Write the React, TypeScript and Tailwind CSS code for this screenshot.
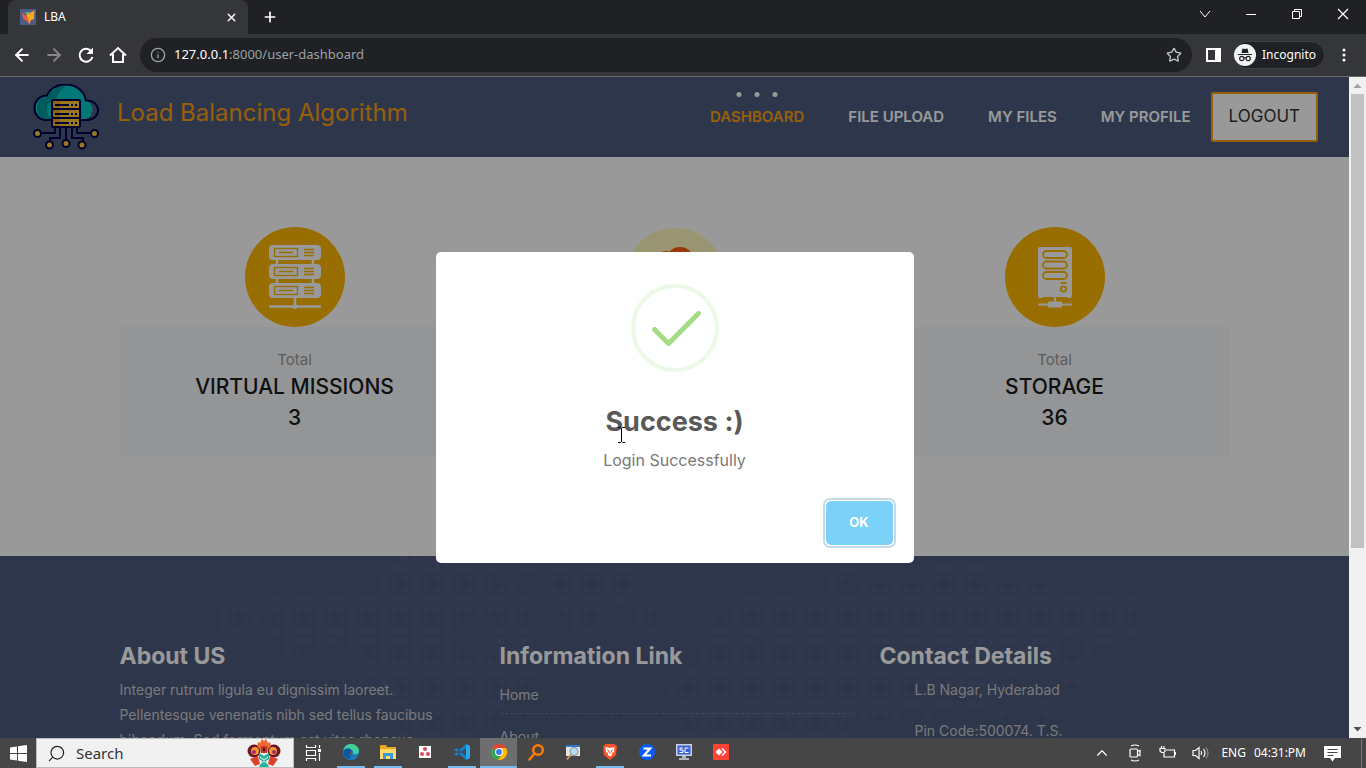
import type { ReactNode } from "react";
import {
  ArrowLeft,
  ArrowRight,
  ChevronUp,
  Info,
  Plus,
  Search,
  Star,
  X,
} from "lucide-react";

const DOT_ROWS: [number, number][][] = [
  [[398, 430]],
  [[383, 500], [520, 640], [840, 855], [925, 985]],
  [[383, 500], [550, 638], [830, 845], [935, 975]],
  [[378, 516], [550, 632], [830, 835], [862, 1050]],
  [[218, 230], [272, 530], [555, 625], [733, 790], [840, 1135]],
  [[218, 250], [272, 530], [560, 605], [638, 655], [725, 1135]],
  [[218, 265], [275, 460], [497, 528], [565, 600], [638, 660], [712, 745], [755, 1135]],
  [[218, 238], [275, 455], [497, 528], [570, 590], [645, 656], [705, 1135]],
  [[282, 335], [345, 455], [495, 530], [705, 755], [765, 1062], [1085, 1110]],
  [[282, 300], [360, 460], [500, 540], [700, 1062], [1085, 1095]],
  [[370, 540], [695, 1085]],
  [[370, 550], [685, 995], [1010, 1030], [1080, 1090]],
  [[378, 530], [680, 995], [1065, 1080]],
  [[380, 515], [670, 1000], [1035, 1050]],
  [[385, 505], [670, 690], [733, 990], [1035, 1055]],
  [[390, 500], [680, 900], [925, 935], [995, 1010], [1035, 1050]],
  [[400, 500], [680, 850], [1030, 1050]],
  [[400, 470], [675, 850]],
];

function WorldDots() {
  const dots: ReactNode[] = [];
  DOT_ROWS.forEach((ranges, r) => {
    for (let k = 0; k < 87; k++) {
      const x = 223.3 + k * 10.67;
      if (ranges.some(([a, b]) => x >= a && x <= b)) {
        dots.push(<rect key={r + "-" + k} x={x - 3} y={r * 10.4 - 1} width="6" height="6" />);
      }
    }
  });
  return (
    <svg aria-hidden="true" className="absolute left-1/2 top-0 -translate-x-1/2" width="1349" height="190" viewBox="0 0 1349 190" fill="#fff" fillOpacity="0.035">
      {dots}
    </svg>
  );
}

function CloudLogo() {
  return (
    <svg width="66" height="67" viewBox="0 0 66 67" fill="none" stroke="#00004c" strokeWidth="2" aria-hidden="true">
      <path d="M11 35.500h41A10 10 0 0 0 53 16.500C49-3 20-4 15 11.500A12 12 0 0 0 11 35.500Z" fill="#00c8c4" stroke="none" />
      <path d="M15 12C20 4 27 1 34 2c-7 3-10 8-11 14-6 1-9 4-9 9 0 5 2 8 5 10h-8A12 12 0 0 1 15 12Z" fill="#009a9c" stroke="none" />
      <path d="M19 36h-6C-2 36-3 12 14 11.500 20-4 49-4 53 16.500c16 0 16 19 1 19.500h-6" />
      <path d="M22 43v6H9M27 43v11H17v3M33 43v13M39 43v11h11v3M44 43v6h14" strokeWidth="2" />
      <rect x="19" y="16" width="28" height="27" rx="1" fill="#ffcc38" />
      <path d="M20 17h7v25h-7z" fill="#f5a623" stroke="none" />
      <path d="M19 25h28M19 34h28" />
      <path d="M22 21h14M22 30h14M22 39h14M38 21h2M42 21h2M38 30h2M42 30h2M38 39h2M42 39h2" />
      <g fill="#ffcc38">
        <circle cx="4.500" cy="49.500" r="3.500" />
        <circle cx="61.500" cy="49.500" r="3.500" />
        <circle cx="16.500" cy="61" r="3.500" />
        <circle cx="33" cy="59.500" r="3.500" />
        <circle cx="49" cy="61" r="3.500" />
      </g>
    </svg>
  );
}

function RackIcon() {
  return (
    <svg width="100" height="100" viewBox="0 0 100 100" aria-hidden="true">
      <circle cx="50" cy="50" r="50" fill="#ffb700" />
      <g stroke="#fff" strokeWidth="2.500" strokeLinecap="round">
        <path d="M32 25v40M68 25v40M50 69v11M25 79.500h50" />
      </g>
      <circle cx="50" cy="79.500" r="2.500" fill="#fff" />
      {[18, 37, 56].map((y) => (
        <g key={y} transform={"translate(24 " + y + ")"}>
          <rect width="52" height="15" rx="4" fill="#fff" />
          <g fill="none" stroke="#ffb700" strokeWidth="1.300">
            <rect x="5.500" y="3.500" width="23" height="8" />
            <path d="M10 7.500h14M35 4.500h10M35 7.500h10M35 10.500h10" />
          </g>
        </g>
      ))}
    </svg>
  );
}

function TowerIcon() {
  return (
    <svg width="100" height="100" viewBox="0 0 100 100" aria-hidden="true">
      <circle cx="50" cy="50" r="50" fill="#ffb700" />
      <path d="M35 20h30q2 0 2 2v47q0 2-2 2h-2l-1-1H38l-1 1h-2q-2 0-2-2V22q0-2 2-2Z" fill="#fff" />
      <g fill="none" stroke="#ffb700" strokeWidth="1.800">
        <rect x="38" y="24" width="24" height="7" rx="3.500" />
        <rect x="38" y="34.500" width="24" height="7" rx="3.500" />
        <rect x="38" y="45" width="24" height="7" rx="3.500" />
        <circle cx="58.500" cy="62" r="2.700" />
        <path d="M55.500 56h6" />
      </g>
      <path d="M50 70v6M34 77.500h32" stroke="#fff" strokeWidth="1.800" strokeLinecap="round" />
      <rect x="43" y="74.500" width="14" height="6" rx="1" fill="#fff" />
    </svg>
  );
}

function CloudUserIcon() {
  return (
    <svg width="100" height="100" viewBox="0 0 100 100" aria-hidden="true">
      <circle cx="50" cy="51" r="50" fill="#fff9c0" />
      <circle cx="55" cy="34" r="14" fill="#ff5c0a" />
      <circle cx="41" cy="36" r="12" fill="#ff5c0a" />
    </svg>
  );
}

function StatCard({ icon, title, value }: { icon: ReactNode; title?: string; value?: string }) {
  return (
    <article className="flex flex-col items-center">
      {icon}
      <div className="flex w-full flex-1 flex-col items-center bg-[#f5f8fc] pt-[18px] pb-6">
        {title && (
          <>
            <p className="text-[15px] leading-[30px] text-[#9b9b9b]">Total</p>
            <h2 className="text-[21px] leading-6 font-medium text-[#1b1b1b]">{title}</h2>
            <p className="pt-1 text-[21px] leading-[29px] font-medium text-[#1b1b1b]">{value}</p>
          </>
        )}
      </div>
    </article>
  );
}

function BrowserChrome() {
  return (
    <header className="shrink-0 border-b border-[#67686b] bg-[#35363a] font-['Noto_Sans',sans-serif] text-white">
      <div className="flex h-[34px] items-stretch bg-[#202124] pl-2">
        <div className="flex w-60 items-center rounded-t-lg bg-[#35363a] pr-2.5 pl-3">
          <svg width="16" height="16" viewBox="0 0 16 16" aria-hidden="true">
            <path fill="#4d5c85" d="M0 0h16v16H0z" />
            <path fill="#49a9b5" d="M4 3.500 10 2.500l-3 3z" />
            <path fill="#ef5b3c" d="m1.500 3 6 5.500 3 4-1 3-2.500-3.500L3.500 10z" />
            <path fill="#f9a61a" d="M6 5.500 14.500 1.500 14 10l-3.500 1.500-1 3.500-1-4z" />
          </svg>
          <span className="ml-2 text-xs">LBA</span>
          <button aria-label="Close tab" className="ml-auto"><X size={13} strokeWidth={2.5} /></button>
        </div>
        <button aria-label="New tab" className="ml-3.5"><Plus size={16} strokeWidth={2.5} /></button>
        <div className="ml-auto flex w-[167px] items-center justify-between pr-[17px] pb-1.5">
          <button aria-label="Search tabs">
            <svg width="12" height="12" viewBox="0 0 12 12" fill="none" stroke="#fff"><path d="m1 3 5 6 5-6" /></svg>
          </button>
          <button aria-label="Minimize">
            <svg width="12" height="12" viewBox="0 0 12 12" fill="none" stroke="#fff"><path d="M1 6.500h10" /></svg>
          </button>
          <button aria-label="Restore">
            <svg width="12" height="12" viewBox="0 0 12 12" fill="none" stroke="#fff"><path d="M1.500 3.500h7v7h-7zM3.500 3.500v-2h7v7h-2" /></svg>
          </button>
          <button aria-label="Close window">
            <svg width="12" height="12" viewBox="0 0 12 12" fill="none" stroke="#fff" strokeWidth="1.200"><path d="m1 1 10 10M11 1 1 11" /></svg>
          </button>
        </div>
      </div>
      <div className="flex h-[42px] items-center pl-3">
        <nav aria-label="Browser" className="flex items-center gap-3">
          <button aria-label="Back"><ArrowLeft size={20} strokeWidth={2.3} /></button>
          <button aria-label="Forward" className="text-[#85868a]"><ArrowRight size={20} strokeWidth={2.3} /></button>
          <button aria-label="Reload">
            <svg width="20" height="20" viewBox="0 0 20 20" fill="none" stroke="#fff" strokeWidth="2"><path d="M15.500 6.500A6.500 6.500 0 1 0 16.400 12" /><path d="M17 2.500V9h-6.500Z" fill="#fff" stroke="none" /></svg>
          </button>
          <button aria-label="Home page">
            <svg width="20" height="20" viewBox="0 0 20 20" fill="none" stroke="#fff" strokeWidth="2"><path d="M2 10.500 10 3l8 7.500M5 9v8h10V9" /></svg>
          </button>
        </nav>
        <div className="ml-3 flex h-[34px] flex-1 items-center rounded-full bg-[#202124] px-2.5">
          <Info size={16} className="text-[#9aa0a6]" />
          <p className="ml-2 text-[13px] text-[#9aa0a6]"><span className="text-white">127.0.0.1</span>:8000/user-dashboard</p>
          <button aria-label="Bookmark" className="ml-auto text-[#c4c7ca]"><Star size={16} /></button>
        </div>
        <button aria-label="Side panel" className="ml-3.5">
          <svg width="15" height="14" viewBox="0 0 15 14"><path d="M0 0h15v14H0zM2 2v10h7V2z" fill="#fff" fillRule="evenodd" /></svg>
        </button>
        <button className="ml-3 flex h-7 items-center gap-1.5 rounded-full border border-[#3f4043] bg-[#202124] pr-2 text-xs">
          <svg width="22" height="22" viewBox="0 0 22 22" aria-hidden="true">
            <circle cx="11" cy="11" r="11" fill="#f1f3f4" />
            <path d="m7.500 9 1-4.500 2.500.6 2.500-.6 1 4.500z" fill="#202124" />
            <g fill="none" stroke="#202124" strokeWidth="1.200"><path d="M4 10.500h14M10 14q1-.8 2 0" /><circle cx="7.800" cy="14.500" r="2.100" /><circle cx="14.200" cy="14.500" r="2.100" /></g>
          </svg>
          Incognito
        </button>
        <button aria-label="Menu" className="mr-3.5 ml-[11px]">
          <svg width="16" height="16" viewBox="0 0 16 16" fill="#fff"><circle cx="8" cy="3" r="1.500" /><circle cx="8" cy="8" r="1.500" /><circle cx="8" cy="13" r="1.500" /></svg>
        </button>
      </div>
    </header>
  );
}

function SiteHeader() {
  return (
    <header className="flex h-20 items-center bg-[#4e5b7f] pr-[31px] pl-[33px]">
      <CloudLogo />
      <p className="ml-[18px] pb-2 text-2xl text-[#fa9f0f]">Load Balancing Algorithm</p>
      <nav aria-label="Main" className="ml-auto flex items-center gap-11 text-[15px] font-semibold text-white">
        <a href="#dashboard" className="relative text-[#fa9f0f]">
          <span className="absolute -top-3.5 left-1/2 flex -translate-x-1/2 gap-[13px]">
            <i className="size-[5px] rounded-full bg-white" />
            <i className="size-[5px] rounded-full bg-white" />
            <i className="size-[5px] rounded-full bg-white" />
          </span>
          DASHBOARD
        </a>
        <a href="#upload">FILE UPLOAD</a>
        <a href="#files">MY FILES</a>
        <a href="#profile">MY PROFILE</a>
      </nav>
      <button className="ml-5 h-[50px] rounded-xs border-2 border-[#fa9f0f] bg-white px-4 text-[17px] text-[#333]">LOGOUT</button>
    </header>
  );
}

function SiteFooter() {
  return (
    <footer className="relative h-[300px] bg-[#4e5b7f] pt-[85px] text-sm text-[#cbcbcb]">
      <WorldDots />
      <div className="relative mx-auto grid max-w-[1110px] grid-cols-3 gap-[30px]">
        <section>
          <h3 className="text-[23px] leading-[30px] font-bold text-white">About US</h3>
          <p className="pt-1.5 leading-[25px]">
            Integer rutrum ligula eu dignissim laoreet. <br />
            Pellentesque venenatis nibh sed tellus faucibus <br />
            bibendum. Sed fermentum est vitae rhoncus
          </p>
        </section>
        <section>
          <h3 className="text-[23px] leading-[30px] font-bold text-white">Information Link</h3>
          <ul className="pt-px leading-[25px]">
            <li className="border-b border-dashed border-[#6d7895] pt-2.5 pb-1.5"><a href="#home">Home</a></li>
            <li className="border-b border-dashed border-[#6d7895] pt-2.5 pb-1.5"><a href="#about">About</a></li>
          </ul>
        </section>
        <section>
          <h3 className="text-[23px] leading-[30px] font-bold text-white">Contact Details</h3>
          <address className="flex flex-col gap-4 pt-1.5 pl-[35px] leading-[25px] not-italic">
            <span>L.B Nagar, Hyderabad</span>
            <span>Pin Code:500074. T.S.</span>
          </address>
        </section>
      </div>
    </footer>
  );
}

function SuccessDialog() {
  return (
    <div className="absolute inset-0 flex items-center justify-center bg-black/40">
      <div role="dialog" aria-labelledby="dlg-title" className="relative flex w-[478px] flex-col items-center rounded-[5px] bg-white px-[18px] pt-8 pb-[15px]">
        <svg width="88" height="88" viewBox="0 0 88 88" fill="none" aria-hidden="true">
          <circle cx="44" cy="44" r="42" stroke="#edf8e7" strokeWidth="4" />
          <path d="m23.500 45.500 14 14 30-30" stroke="#a5dc86" strokeWidth="5" strokeLinecap="round" strokeLinejoin="round" />
        </svg>
        <h2 id="dlg-title" className="mt-8 text-[27px] leading-9 font-bold text-[#595959]">Success :)</h2>
        <p className="mt-2 text-base leading-6 text-[#797979]">Login Successfully</p>
        <button className="mt-[26px] flex h-[50px] w-[73px] self-end rounded-[7px] border-2 border-[#c3daea] bg-white p-px text-[13px] font-bold text-white">
          <span className="flex h-full w-full items-center justify-center rounded-[5px] bg-[#7cd1f9]">OK</span>
        </button>
        <svg className="absolute top-[175px] left-[182px]" width="7" height="16" viewBox="0 0 7 16" fill="none" stroke="#000" aria-hidden="true"><path d="M0 .5h2.500l1 1 1-1H7M3.500 1v14M0 15.500h2.500l1-1 1 1H7" /></svg>
      </div>
    </div>
  );
}

function PageScrollbar() {
  return (
    <div aria-hidden="true" className="flex w-[17px] shrink-0 flex-col items-center bg-[#f1f1f1]">
      <svg width="17" height="17" viewBox="0 0 17 17"><path d="m4.500 11 4-4.500 4 4.500z" fill="#a3a3a3" /></svg>
      <div className="w-[13px] flex-1 bg-[#c1c1c1]" />
      <div className="h-[172px]" />
      <svg width="17" height="18" viewBox="0 0 17 18"><path d="m4.500 7 4 4.500 4-4.500z" fill="#505050" /></svg>
    </div>
  );
}

const TASKS: { name: string; open?: boolean; active?: boolean; icon: ReactNode }[] = [
  {
    name: "Edge", open: true, icon: (
      <>
        <circle cx="9" cy="9" r="8" fill="#1683d0" />
        <path d="M1.500 7C3-1 15-1 17 7c.5 4-3 5-6 4 1-2 0-4.500-3-4.500S3 8 1.500 7Z" fill="#43cf98" />
        <path d="M2 7c3-3 7-2 8 1-4 0-4 5 0 7-5 3-10-3-8-8Z" fill="#0b58a4" />
        <path d="M10 8c-2 2-1 5 3 5l3-1c-3 3-9 1-9-2 0-1 1-2 3-2Z" fill="#4a4a4a" />
      </>
    ),
  },
  {
    name: "File Explorer", open: true, icon: (
      <>
        <path d="M1 2h6l1 2h9v12H1z" fill="#e7a91f" />
        <path d="M1 6h16v10H1z" fill="#ffda68" />
        <path d="M4 16v-6h10v6h-3v-3H7v3z" fill="#3d9ade" />
      </>
    ),
  },
  {
    name: "Toolbox", icon: (
      <>
        <path d="M3 3h12v12H3z" fill="#fff" />
        <g fill="#dd4a5b"><circle cx="9" cy="6" r="2" /><circle cx="6" cy="11" r="2" /><circle cx="12" cy="11" r="2" /></g>
      </>
    ),
  },
  {
    name: "Visual Studio Code", open: true, icon: (
      <>
        <path d="m13 1 4 2v12l-4 2z" fill="#2aa5ef" />
        <path d="M13 1v4L3.500 13 1 11.500zM13 17v-4L3.500 5 1 6.500z" fill="#147fc8" />
      </>
    ),
  },
  {
    name: "Chrome", open: true, active: true, icon: (
      <>
        <circle cx="9" cy="9" r="8" fill="#e84335" />
        <path d="M9 9 2 5a8 8 0 0 0 6 12l4-6z" fill="#31a853" />
        <path d="M9 5h7a8 8 0 0 1-8 12l4-6z" fill="#fbbc05" />
        <circle cx="9" cy="9" r="4" fill="#fff" />
        <circle cx="9" cy="9" r="3" fill="#3b7ded" />
      </>
    ),
  },
  {
    name: "Everything", icon: (
      <g fill="none" stroke="#ff7b00" strokeWidth="2.500"><circle cx="11" cy="7" r="4.800" /><path d="m7.500 10.500-5 6" strokeLinecap="round" /></g>
    ),
  },
  {
    name: "Log Viewer", icon: (
      <>
        <path d="M2 2h14v11H2z" fill="#e9e4d7" /><path d="M2 2h14v2H2z" fill="#2f76c9" />
        <circle cx="10" cy="8.500" r="4" fill="#b9dcf4" stroke="#7593ab" /><path d="m7 11.500-4 5" stroke="#c89b66" strokeWidth="2" />
      </>
    ),
  },
  {
    name: "Brave", open: true, icon: (
      <>
        <path d="m5 1-3 2 1 9 6 5 6-5 1-9-3-2z" fill="#fb542b" />
        <path d="m4.500 4 4.500 1 4.500-1-.5 5-2 1.500V12l-2 1.500L7 12v-1.500L5 9z" fill="#fff" />
        <path d="M6 6.500 8 8l-1 1.500M12 6.500 10 8l1 1.500M9 9v2" stroke="#fb542b" fill="none" />
      </>
    ),
  },
  {
    name: "Zoho", icon: (
      <>
        <circle cx="9" cy="9" r="8" fill="#0b5cff" />
        <path d="M5.500 5.500h6.500l-6 7h7" fill="none" stroke="#fff" strokeWidth="2.200" />
      </>
    ),
  },
  {
    name: "Screen Connect", icon: (
      <>
        <path d="M1 1h16v12H1z" fill="#c9d1de" /><path d="M2.500 2.500h13v9h-13z" fill="#3b62db" />
        <path d="M7 13h4v2h3v2H4v-2h3z" fill="#aeb5c0" />
        <path d="M8 5H5v2h3v2.500H4.500M13.500 5H10v4.500h3.500" fill="none" stroke="#fff" />
      </>
    ),
  },
  {
    name: "AnyDesk", icon: (
      <>
        <path d="M1 1h16v16H1z" fill="#ff4136" />
        <path d="m3.500 9 3.500-3.500L10.500 9 7 12.500z" fill="#fff" /><path d="m10 5.500 3.500 3.500-3.500 3.500" fill="none" stroke="#fff" strokeWidth="1.500" />
      </>
    ),
  },
];

function FolkBird() {
  return (
    <svg width="34" height="28" viewBox="0 0 34 28" aria-hidden="true">
      <circle cx="7" cy="12" r="6.500" fill="#6d1627" /><circle cx="27" cy="12" r="6.500" fill="#6d1627" />
      <circle cx="8" cy="12" r="4" fill="#ef9a32" /><circle cx="26" cy="12" r="4" fill="#ef9a32" />
      <circle cx="7" cy="13" r="2" fill="#a3266e" /><circle cx="27" cy="13" r="2" fill="#a3266e" />
      <path d="m3 20 8-3 2 8-5 2zM31 20l-8-3-2 8 5 2z" fill="#d8442c" />
      <path d="m10 7 1-4 2 1 2-4 2 2 2-2 2 4 2-1 1 4-4 4h-6z" fill="#ee6a32" />
      <path d="M14 7h6v7h-6z" fill="#c23a26" /><path d="M16 9h2v3h-2z" fill="#4b1713" />
      <path d="m12 14 5 3 5-3v6l-3 2 3 6H12l3-6-3-2z" fill="#25b39b" />
      <path d="m13 18 4 3 4-3M13 25l4-3 4 3" fill="none" stroke="#e5f5e8" />
    </svg>
  );
}

function Taskbar() {
  return (
    <footer className="flex h-[30px] shrink-0 items-stretch bg-[#464646] font-['Noto_Sans',sans-serif] text-xs text-white">
      <button aria-label="Start" className="flex w-9 items-center justify-center">
        <svg width="17" height="17" viewBox="0 0 17 17" fill="#fff"><path d="m0 2.500 7-1V8H0zM8 1.300 17 0v8H8zM0 9h7v6.500l-7-1zM8 9h9v8l-9-1.300z" /></svg>
      </button>
      <label className="flex w-[258px] items-center border border-[#bcbcbc] bg-[#f1f1f1] pr-3 pl-2.5 text-[#222]">
        <Search size={19} strokeWidth={1.5} className="-scale-x-100" />
        <input type="search" aria-label="Search" placeholder="Search" className="ml-2.5 min-w-0 flex-1 bg-transparent text-[15px] outline-none placeholder:text-[#333]" />
        <FolkBird />
      </label>
      <button aria-label="Task view" className="flex w-[38px] items-center justify-center">
        <svg width="17" height="16" viewBox="0 0 17 16" fill="none" stroke="#fff" strokeWidth="1.200"><path d="M1.500 0v2.500h9V0M1.500 5.500h9v5h-9zM1.500 16v-2.500h9V16M14.500 0v3M14.500 8v8" /><path d="M13 4h3v3h-3z" fill="#fff" stroke="none" /></svg>
      </button>
      {TASKS.map((t) => (
        <button key={t.name} aria-label={t.name} className={t.active ? "flex w-[37px] flex-col items-center bg-[#6e6e6e]" : "flex w-[37px] flex-col items-center"}>
          <span className="flex flex-1 items-center">
            <svg width="18" height="18" viewBox="0 0 18 18">{t.icon}</svg>
          </span>
          <span className={t.active ? "h-0.5 w-full bg-[#76b9ed]" : t.open ? "h-0.5 w-7 bg-[#76b9ed]" : "h-0.5 w-7"} />
        </button>
      ))}
      <div className="ml-auto flex items-center pr-1">
        <div className="flex items-center gap-4">
          <ChevronUp size={18} strokeWidth={1.5} />
          <svg width="16" height="18" viewBox="0 0 16 18" fill="none" stroke="#fff" strokeWidth="1.200"><path d="M4 2q4-2 8 0M4 16q4 2 8 0M10.500 7.500l2.500-1v5l-2.500-1" /><rect x="3" y="5" width="7.500" height="8" rx="1" /></svg>
          <svg width="17" height="16" viewBox="0 0 17 16" fill="none" stroke="#fff" strokeWidth="1.200"><path d="M7 5h8.500v7H5V8M16.500 7v3M1 3.500h5V6L5 7.500H2.500L1 6zM2.500 1v2M4.800 1v2" /></svg>
          <svg width="17" height="16" viewBox="0 0 17 16" fill="none" stroke="#fff" strokeWidth="1.200"><path d="M1 5.500h2.500L7 2.500v11L3.500 10.500H1zM9 6q1.500 2 0 4M11.500 4q3 4 0 8" /><path d="M14 2.500q4 5.500 0 11" stroke="#888" /></svg>
        </div>
        <span className="ml-3">ENG</span>
        <span className="ml-2">04:31:PM</span>
        <svg className="ml-[18px]" width="17" height="17" viewBox="0 0 17 17" aria-hidden="true"><path d="M0 1h17v12h-6l-2.500 3.500L6 13H0z" fill="#fff" /><path d="M3.500 4.500h10M3.500 7.500h10M3.500 10.500h6" stroke="#464646" /></svg>
        <span className="ml-5 h-[30px] w-px bg-[#777]" />
      </div>
    </footer>
  );
}

export default function App() {
  return (
    <div className="flex h-screen flex-col overflow-hidden">
      <BrowserChrome />
      <div className="flex min-h-0 flex-1">
        <div className="relative min-w-0 flex-1 overflow-hidden bg-white font-['Inter',sans-serif]">
          <SiteHeader />
          <main className="mx-auto grid max-w-[1110px] grid-cols-3 gap-[30px] pt-[70px] pb-[100px]">
            <StatCard icon={<RackIcon />} title="VIRTUAL MISSIONS" value="3" />
            <StatCard icon={<CloudUserIcon />} />
            <StatCard icon={<TowerIcon />} title="STORAGE" value="36" />
          </main>
          <SiteFooter />
          <SuccessDialog />
        </div>
        <PageScrollbar />
      </div>
      <Taskbar />
    </div>
  );
}
